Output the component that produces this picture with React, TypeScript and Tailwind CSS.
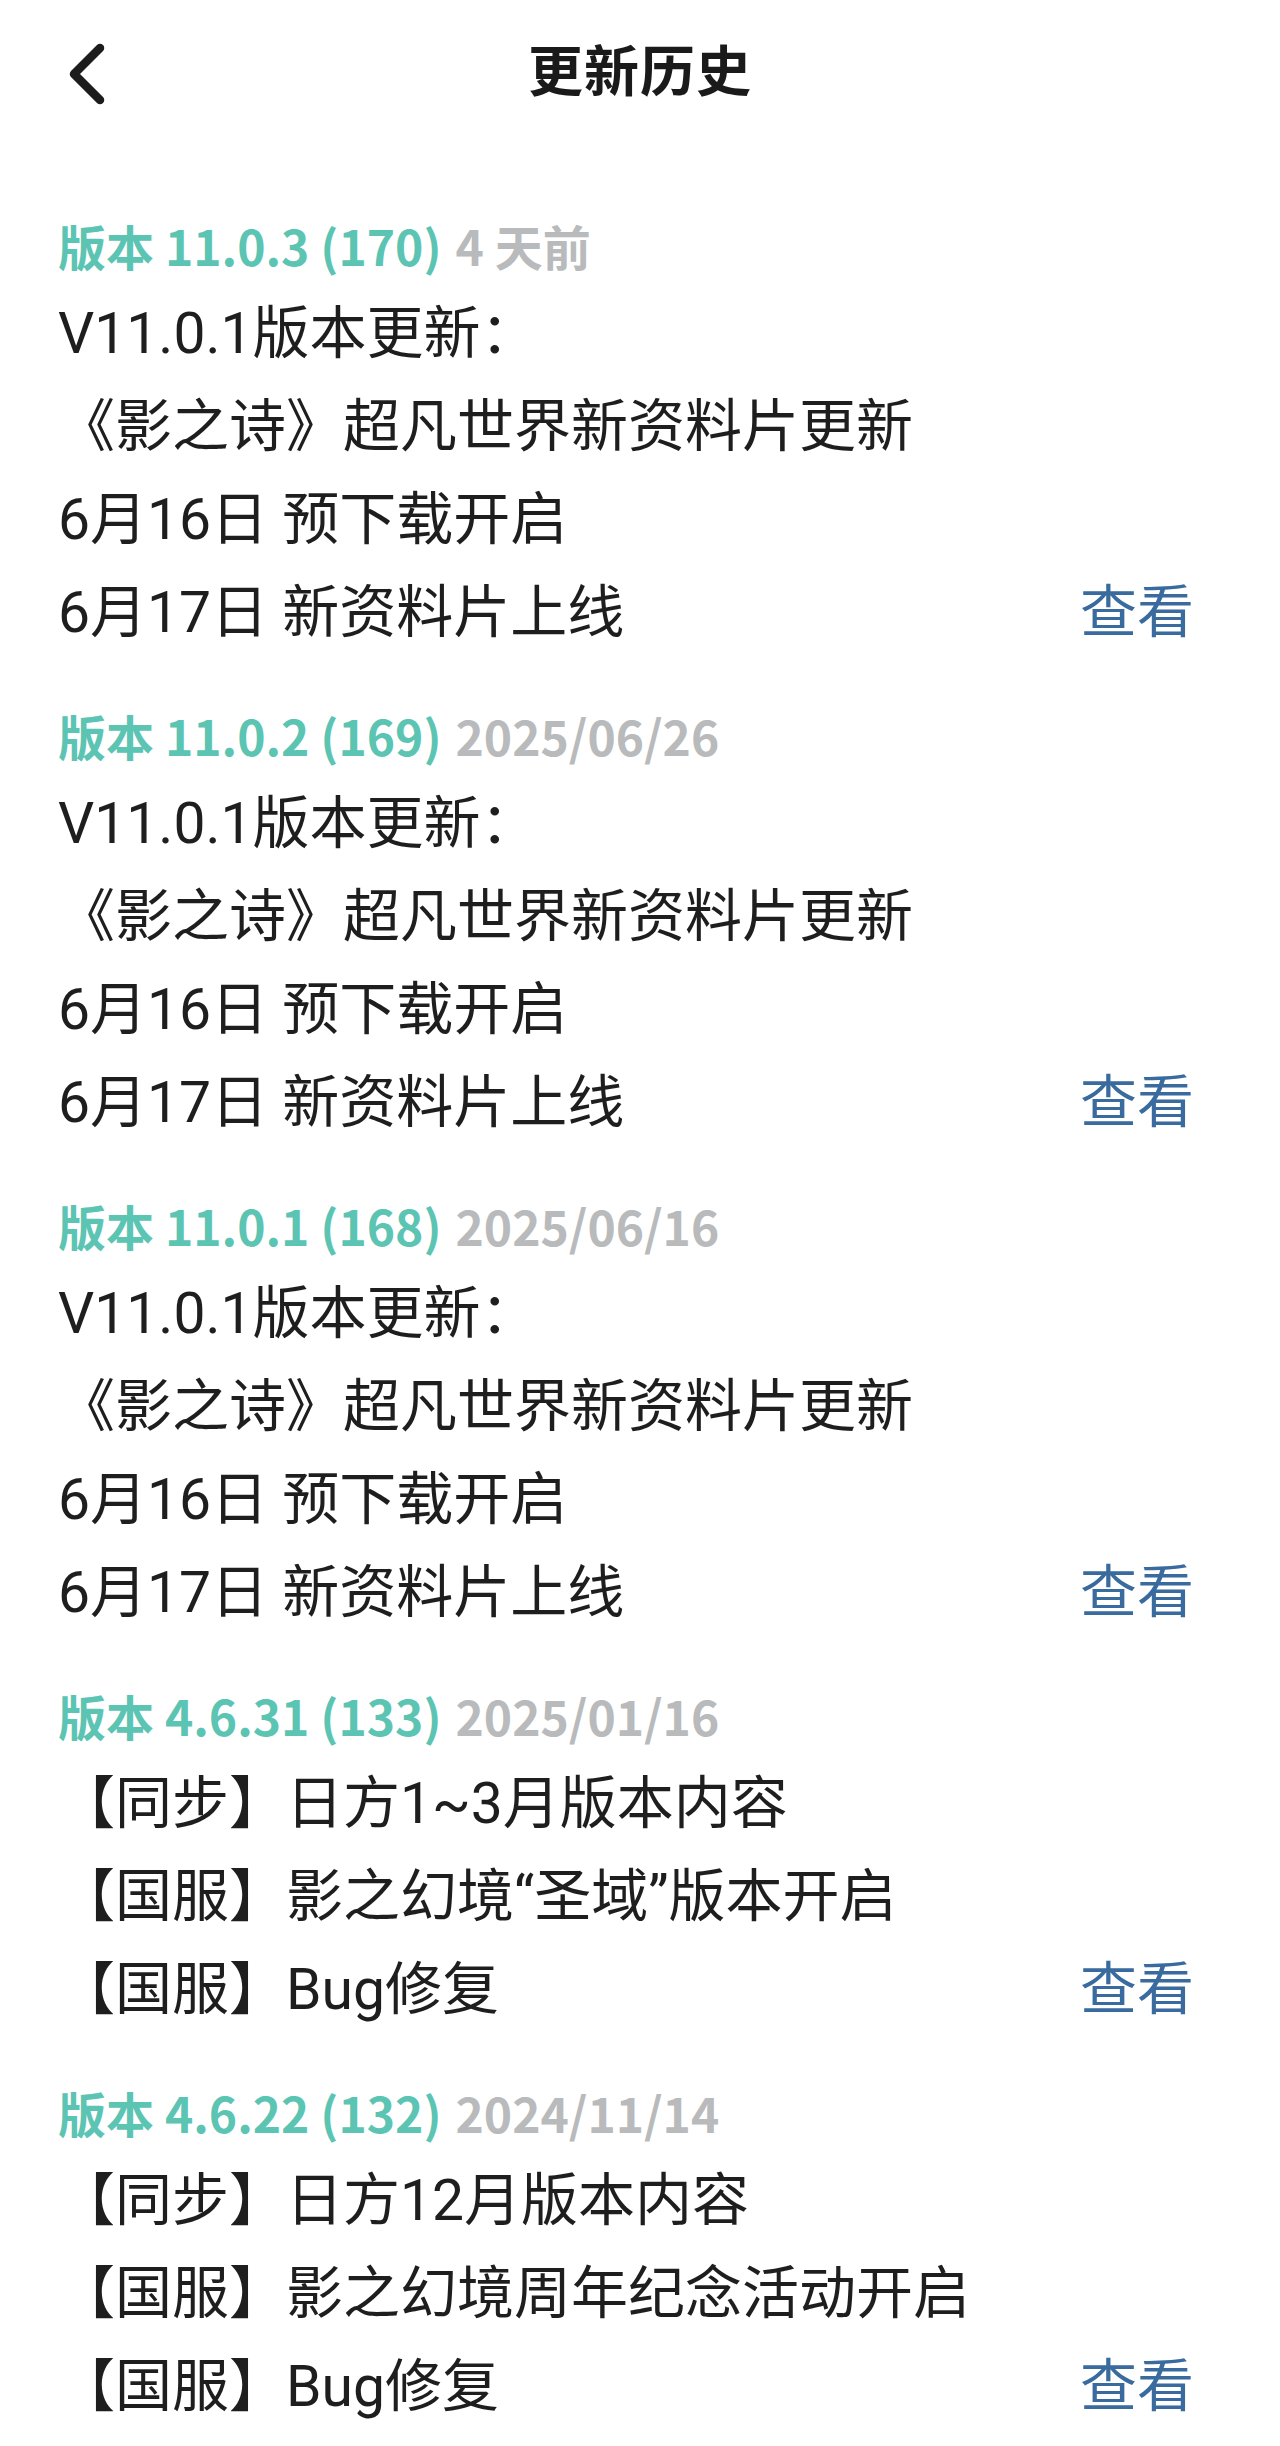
import React from 'react'

type Release = {
  version: string
  date: string
  lines: string[]
}

const releases: Release[] = [
  {
    version: '版本 11.0.3 (170)',
    date: '4 天前',
    lines: ['V11.0.1版本更新：', '《影之诗》超凡世界新资料片更新', '6月16日 预下载开启', '6月17日 新资料片上线'],
  },
  {
    version: '版本 11.0.2 (169)',
    date: '2025/06/26',
    lines: ['V11.0.1版本更新：', '《影之诗》超凡世界新资料片更新', '6月16日 预下载开启', '6月17日 新资料片上线'],
  },
  {
    version: '版本 11.0.1 (168)',
    date: '2025/06/16',
    lines: ['V11.0.1版本更新：', '《影之诗》超凡世界新资料片更新', '6月16日 预下载开启', '6月17日 新资料片上线'],
  },
  {
    version: '版本 4.6.31 (133)',
    date: '2025/01/16',
    lines: ['【同步】日方1~3月版本内容', '【国服】影之幻境“圣域”版本开启', '【国服】Bug修复'],
  },
  {
    version: '版本 4.6.22 (132)',
    date: '2024/11/14',
    lines: ['【同步】日方12月版本内容', '【国服】影之幻境周年纪念活动开启', '【国服】Bug修复'],
  },
]

function BackIcon() {
  return (
    <svg width="60" height="70" viewBox="0 0 60 70" fill="none">
      <path d="M39 9 L13 35 L39 61" stroke="#1c1c1c" strokeWidth="8.5" strokeLinecap="round" strokeLinejoin="round" />
    </svg>
  )
}

export default function App() {
  return (
    <div className="min-h-[2446px] w-[1280px] bg-white font-['Roboto','Noto_Sans_CJK_SC',sans-serif] text-[#1e1e1e]">
      {/* nav */}
      <div className="grid h-[144px] grid-cols-[1fr_auto_1fr] items-center">
        <div className="pl-[61px] pt-[4px]">
          <BackIcon />
        </div>
        <div className="text-[55px] font-bold leading-none tracking-[1px] text-[#1a1a1a]">更新历史</div>
        <div />
      </div>

      <div className="pt-[71px] pl-[58px] pr-[86px]">
        {releases.map((r) => (
          <div key={r.version} className="mb-[46px]">
            <div className="flex h-[60px] items-center gap-[14px] font-['Noto_Sans_CJK_SC',sans-serif] text-[48px] font-bold leading-[60px]">
              <span className="text-[#5cc4b3]">{r.version}</span>
              <span className="text-[#b9babc]">{r.date}</span>
            </div>
            <div className="mt-[12px]">
              {r.lines.map((line, i) => (
                <div key={i} className="flex h-[93px] items-center justify-between text-[57px] leading-[93px]">
                  <span>{line}</span>
                  {i === r.lines.length - 1 && <span className="text-[#3a6b9f]">查看</span>}
                </div>
              ))}
            </div>
          </div>
        ))}
      </div>
    </div>
  )
}
